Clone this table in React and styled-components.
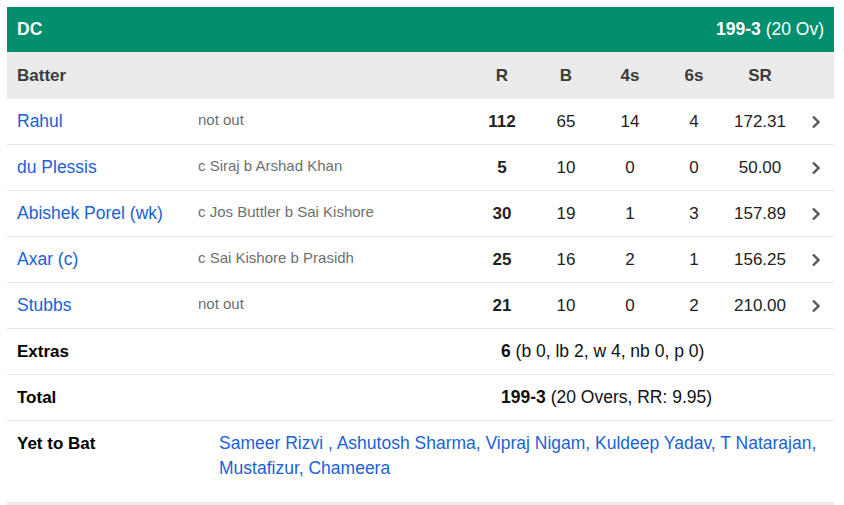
import styled, { createGlobalStyle } from "styled-components";

const GlobalStyle = createGlobalStyle`
  body {
    margin: 0;
    background: #fff;
    font-family: "Liberation Sans", Arial, sans-serif;
  }
`;

const Page = styled.div`
  padding: 7px 10px 0 7px;
`;

const Card = styled.div`
  width: 827px;
`;

const TeamBar = styled.div`
  height: 45px;
  display: flex;
  align-items: center;
  justify-content: space-between;
  padding: 0 10px;
  background: #018f6e;
  color: #fff;
  font-size: 17.5px;
  box-sizing: border-box;
`;

const Strong = styled.b`
  font-weight: 700;
`;

const COLS = "181px 282px 64px 64px 64px 64px 68px 40px";

const HeadRow = styled.div`
  display: grid;
  grid-template-columns: ${COLS};
  align-items: center;
  height: 47px;
  background: #ebebeb;
  color: #3c3c3c;
  font-size: 17px;
  font-weight: 700;
`;

const Row = styled.div`
  display: grid;
  grid-template-columns: ${COLS};
  align-items: center;
  height: 46px;
  box-sizing: border-box;
  border-bottom: 1px solid #e8e8e8;
  font-size: 17px;
  color: #222;
`;

const Cell = styled.div`
  text-align: ${(p) => (p.$left ? "left" : "center")};
  padding-left: ${(p) => (p.$left ? "10px" : "0")};
  font-weight: ${(p) => (p.$bold ? 700 : "inherit")};
  white-space: nowrap;
`;

const Name = styled.a`
  padding-left: 10px;
  font-size: 17.5px;
  color: #1a62d6;
  text-decoration: none;
  white-space: nowrap;
`;

const Dismissal = styled.div`
  padding-left: 10px;
  padding-bottom: 4px;
  font-size: 15px;
  color: #6f6f6f;
`;

const Chevron = styled.div`
  display: flex;
  justify-content: center;
  padding-left: 4px;
  color: #555;
`;

const SummaryRow = styled.div`
  display: grid;
  grid-template-columns: 494px 1fr;
  align-items: center;
  height: 46px;
  box-sizing: border-box;
  border-bottom: 1px solid #e8e8e8;
  font-size: 17.5px;
  color: #111;
`;

const Label = styled.div`
  padding-left: 10px;
  font-size: 17px;
  font-weight: 700;
  color: #000;
`;

const YetRow = styled.div`
  display: grid;
  grid-template-columns: 202px 1fr;
  padding: 10px 0 21px;
  font-size: 17.5px;
  line-height: 25px;
`;

const YetNames = styled.div`
  padding: 0 10px;
  color: #1a62d6;
`;

const Divider = styled.div`
  height: 6px;
  background: #ebebeb;
`;

const batters = [
  { name: "Rahul", how: "not out", r: 112, b: 65, f: 14, s: 4, sr: "172.31" },
  { name: "du Plessis", how: "c Siraj b Arshad Khan", r: 5, b: 10, f: 0, s: 0, sr: "50.00" },
  { name: "Abishek Porel (wk)", how: "c Jos Buttler b Sai Kishore", r: 30, b: 19, f: 1, s: 3, sr: "157.89" },
  { name: "Axar (c)", how: "c Sai Kishore b Prasidh", r: 25, b: 16, f: 2, s: 1, sr: "156.25" },
  { name: "Stubbs", how: "not out", r: 21, b: 10, f: 0, s: 2, sr: "210.00" },
];

function ChevronIcon() {
  return (
    <svg width="10" height="14" viewBox="0 0 10 14">
      <path d="M2 1.5 L7.5 7 L2 12.5" fill="none" stroke="currentColor" strokeWidth="2.4" />
    </svg>
  );
}

export default function App() {
  return (
    <Page>
      <GlobalStyle />
      <Card>
        <TeamBar>
          <Strong>DC</Strong>
          <span>
            <Strong>199-3</Strong> (20 Ov)
          </span>
        </TeamBar>
        <HeadRow>
          <Cell $left>Batter</Cell>
          <Cell />
          <Cell>R</Cell>
          <Cell>B</Cell>
          <Cell>4s</Cell>
          <Cell>6s</Cell>
          <Cell>SR</Cell>
          <Cell />
        </HeadRow>
        {batters.map((p) => (
          <Row key={p.name}>
            <Name href="#">{p.name}</Name>
            <Dismissal>{p.how}</Dismissal>
            <Cell $bold>{p.r}</Cell>
            <Cell>{p.b}</Cell>
            <Cell>{p.f}</Cell>
            <Cell>{p.s}</Cell>
            <Cell>{p.sr}</Cell>
            <Chevron>
              <ChevronIcon />
            </Chevron>
          </Row>
        ))}
        <SummaryRow>
          <Label>Extras</Label>
          <div>
            <Strong>6</Strong> (b 0, lb 2, w 4, nb 0, p 0)
          </div>
        </SummaryRow>
        <SummaryRow>
          <Label>Total</Label>
          <div>
            <Strong>199-3</Strong> (20 Overs, RR: 9.95)
          </div>
        </SummaryRow>
        <YetRow>
          <Label>Yet to Bat</Label>
          <YetNames>
            Sameer Rizvi , Ashutosh Sharma, Vipraj Nigam, Kuldeep Yadav, T Natarajan,
            Mustafizur, Chameera
          </YetNames>
        </YetRow>
        <Divider />
      </Card>
    </Page>
  );
}
